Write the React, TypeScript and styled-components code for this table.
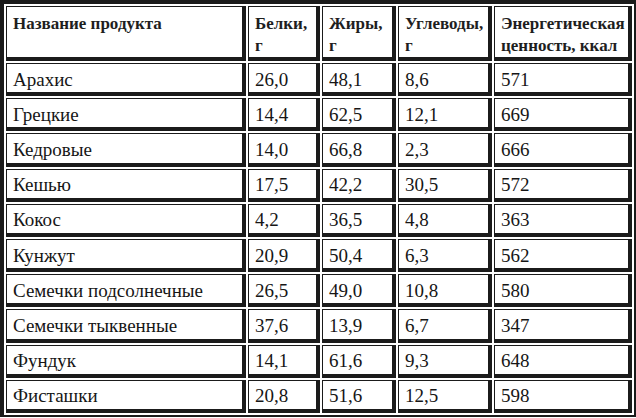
import React from "react";
import styled, { createGlobalStyle } from "styled-components";

const GlobalStyle = createGlobalStyle`
  html, body {
    margin: 0;
    padding: 0;
    background: #ffffff;
  }
`;

const Table = styled.table`
  width: 636px;
  table-layout: fixed;
  border-collapse: separate;
  border-spacing: 2px;
  border-style: solid;
  border-color: #1b1b1b;
  border-width: 4px 2px 2px 4px;
  color: #161616;
  font-family: "Liberation Serif", "DejaVu Serif", serif;
`;

const Cell = styled.td`
  border-style: solid;
  border-color: #1b1b1b;
  border-width: 1px 4px 4px 1px;
  padding: 3px 6px 0 6px;
  vertical-align: middle;
  font-size: 19px;
  white-space: nowrap;
`;

const HeadCell = styled.th`
  border-style: solid;
  border-color: #1b1b1b;
  border-width: 1px 4px 4px 1px;
  padding: 6px 4px 0 6px;
  vertical-align: top;
  text-align: left;
  font-family: "Liberation Serif", serif;
  font-weight: bold;
  font-size: 17px;
  line-height: 22px;
  white-space: nowrap;
  color: #1e1e1e;
`;

const HeadRow = styled.tr`
  height: 53px;
`;

const Row = styled.tr`
  height: 33.2px;
`;

const widths = [240, 72, 74, 94, 138];

const heads = [
  ["Название продукта"],
  ["Белки,", "г"],
  ["Жиры,", "г"],
  ["Углеводы,", "г"],
  ["Энергетическая", "ценность, ккал"],
];

const rows = [
  ["Арахис", "26,0", "48,1", "8,6", "571"],
  ["Грецкие", "14,4", "62,5", "12,1", "669"],
  ["Кедровые", "14,0", "66,8", "2,3", "666"],
  ["Кешью", "17,5", "42,2", "30,5", "572"],
  ["Кокос", "4,2", "36,5", "4,8", "363"],
  ["Кунжут", "20,9", "50,4", "6,3", "562"],
  ["Семечки подсолнечные", "26,5", "49,0", "10,8", "580"],
  ["Семечки тыквенные", "37,6", "13,9", "6,7", "347"],
  ["Фундук", "14,1", "61,6", "9,3", "648"],
  ["Фисташки", "20,8", "51,6", "12,5", "598"],
];

export default function App() {
  return (
    <>
      <GlobalStyle />
      <Table>
        <colgroup>
          {widths.map((w, i) => (
            <col key={i} style={{ width: w }} />
          ))}
        </colgroup>
        <thead>
          <HeadRow>
            {heads.map((lines, i) => (
              <HeadCell key={i}>
                {lines.map((l, j) => (
                  <div key={j}>{l}</div>
                ))}
              </HeadCell>
            ))}
          </HeadRow>
        </thead>
        <tbody>
          {rows.map((r) => (
            <Row key={r[0]}>
              {r.map((v, i) => (
                <Cell key={i}>{v}</Cell>
              ))}
            </Row>
          ))}
        </tbody>
      </Table>
    </>
  );
}
